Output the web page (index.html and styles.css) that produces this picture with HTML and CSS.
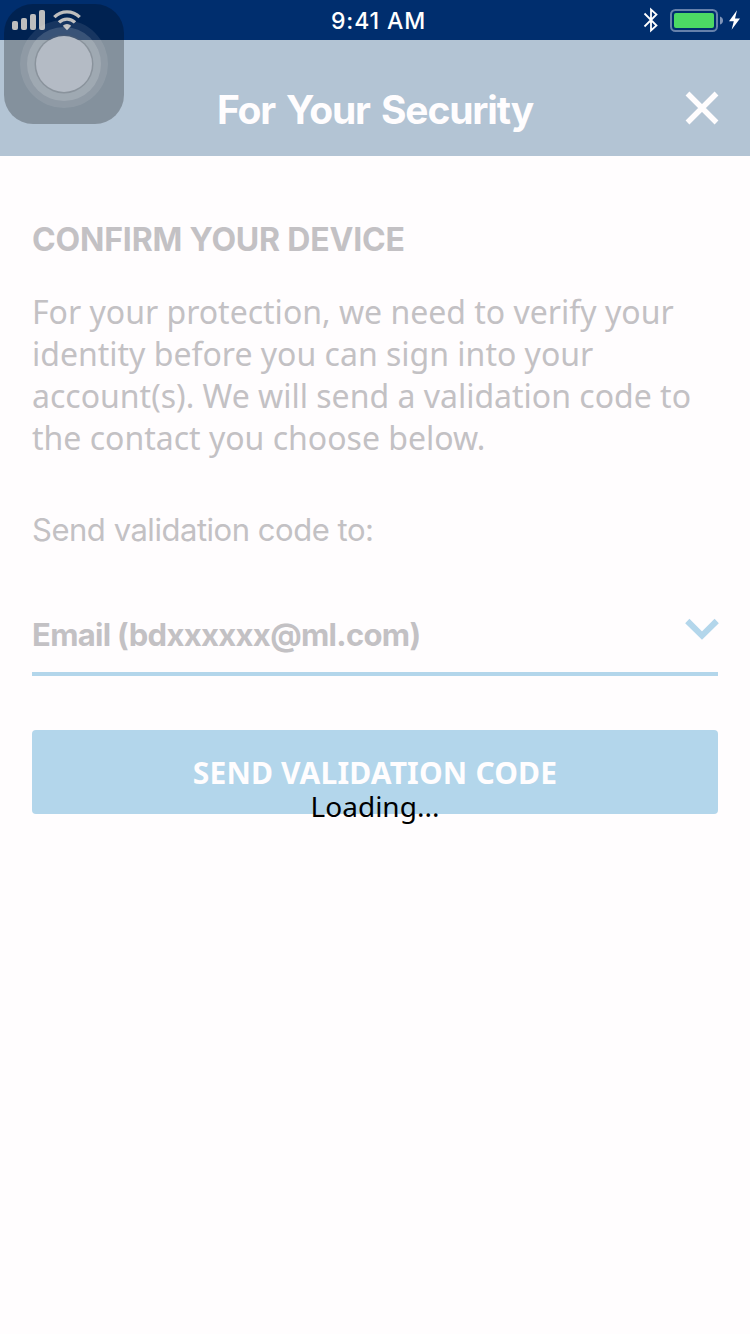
FILE: index.html
```html
<!DOCTYPE html>
<html lang="en">
<head>
<meta charset="utf-8">
<title>For Your Security</title>
<link rel="stylesheet" href="styles.css">
</head>
<body>
<div class="screen">
  <div class="status-bar">
    <svg class="status-left" width="120" height="40" viewBox="0 0 120 40" fill="#fff">
      <rect x="12" y="21" width="6" height="9" rx="2"/>
      <rect x="21" y="18" width="6" height="12" rx="2"/>
      <rect x="30" y="14" width="6" height="16" rx="2"/>
      <rect x="39" y="10" width="6" height="20" rx="2"/>
      <g fill="none" stroke="#fff" stroke-width="3.4">
        <path d="M54.3 17.1A18 18 0 0 1 79.7 17.1"/>
        <path d="M59 22.4A11.3 11.3 0 0 1 75 22.4"/>
      </g>
      <path d="M62.8 25.7A6.2 6.2 0 0 1 71.2 25.7L67 30.2Z"/>
    </svg>
    <span class="clock">9:41 AM</span>
    <svg class="status-right" width="120" height="40" viewBox="0 0 120 40">
      <path d="M14.5 13.5L26.5 25.5L21 30.5V9.5L26.5 14.5L14.5 26.5" fill="none" stroke="#fff" stroke-width="1.8"/>
      <rect x="41" y="10" width="46" height="21" rx="4.5" fill="none" stroke="#6681ab" stroke-width="2"/>
      <path d="M90 16.5Q93 17.5 93 20.5T90 24.5Z" fill="#8095b8"/>
      <rect x="44" y="13" width="40" height="15" rx="2" fill="#4cd964"/>
      <path d="M107 10.2L99 21.3H103.8L101.6 29.8L110 18.4H105Z" fill="#fff"/>
    </svg>
  </div>
  <header class="title-bar">
    <h1 class="title">For Your Security</h1>
    <svg class="close" width="34" height="34" viewBox="0 0 34 34"><path d="M2.5 2.5L31.5 31.5M31.5 2.5L2.5 31.5" fill="none" stroke="#fffdfe" stroke-width="5.4"/></svg>
  </header>
  <main class="content">
    <h2 class="heading">CONFIRM YOUR DEVICE</h2>
    <p class="intro">For your protection, we need to verify your<br>identity before you can sign into your<br>account(s). We will send a validation code to<br>the contact you choose below.</p>
    <p class="label">Send validation code to:</p>
    <div class="select">
      <span class="select-value">Email (bdxxxxxx@ml.com)</span>
      <svg class="chevron" width="34" height="24" viewBox="0 0 34 24"><path d="M2.3 3L17 17.6L31.7 3" fill="none" stroke="#b3d6eb" stroke-width="6"/></svg>
    </div>
    <div class="button">SEND VALIDATION CODE</div>
  </main>
  <div class="loading">Loading...</div>
  <svg class="assistive" width="120" height="120" viewBox="0 0 120 120">
    <rect width="120" height="120" rx="29" fill="#000" fill-opacity=".26"/>
    <circle cx="60" cy="60" r="44" fill="#fff" fill-opacity=".09"/>
    <circle cx="60" cy="60" r="37" fill="#fff" fill-opacity=".15"/>
    <circle cx="60" cy="60" r="29.5" fill="#59616b" fill-opacity=".3"/>
    <circle cx="60" cy="60" r="28" fill="#b4bbc5"/>
  </svg>
</div>
</body>
</html>
```

FILE: styles.css
```css
body {
  margin: 0;
  font-family: "Noto Sans", sans-serif;
  background: #fffdfe;
}
.screen {
  position: relative;
  width: 750px;
  height: 1334px;
  overflow: hidden;
}
.status-bar {
  display: grid;
  grid-template-columns: 120px 1fr 120px;
  height: 40px;
  background: #002e6e;
}
.clock {
  padding-left: 7px;
  font: 500 23px/42px Inter, sans-serif;
  letter-spacing: .9px;
  color: #fff;
  text-align: center;
}
.title-bar {
  display: grid;
  grid-template-columns: 1fr 34px;
  align-items: center;
  height: 116px;
  padding: 0 31px 0 65px;
  box-sizing: border-box;
  background: #b3c4d4;
}
.title {
  margin: 24px 0 0;
  font: 700 39px/48px Inter, sans-serif;
  letter-spacing: -1.15px;
  word-spacing: 3px;
  color: #fffdfe;
  text-align: center;
  white-space: nowrap;
}
.close { margin-top: 20px; }
.content {
  padding: 63px 32px 0;
  color: #c3c1c4;
}
.heading {
  margin: 0;
  font: 700 32px/42px Inter, sans-serif;
  letter-spacing: -.17px;
}
.intro {
  margin: 30px 0 0;
  font-size: 32px;
  line-height: 42px;
  white-space: nowrap;
}
.label {
  margin: 50px 0 0;
  font: 400 31px/42px Inter, sans-serif;
  letter-spacing: -.47px;
}
.select {
  display: flex;
  justify-content: space-between;
  align-items: flex-start;
  height: 58px;
  margin-top: 63px;
  border-bottom: 4px solid #b3d6eb;
}
.select-value {
  font: 700 31px/42px Inter, sans-serif;
  letter-spacing: -.69px;
}
.chevron { margin: 4px -1px 0 0; }
.button {
  height: 84px;
  margin-top: 54px;
  border-radius: 4px;
  background: #b3d6eb;
  color: #fffdfe;
  font-weight: 700;
  font-size: 30px;
  line-height: 86px;
  letter-spacing: .17px;
  text-align: center;
}
.loading {
  position: absolute;
  top: 786px;
  left: 0;
  width: 750px;
  font-size: 28px;
  line-height: 40px;
  color: #000;
  text-align: center;
}
.assistive {
  position: absolute;
  top: 4px;
  left: 4px;
}
```
